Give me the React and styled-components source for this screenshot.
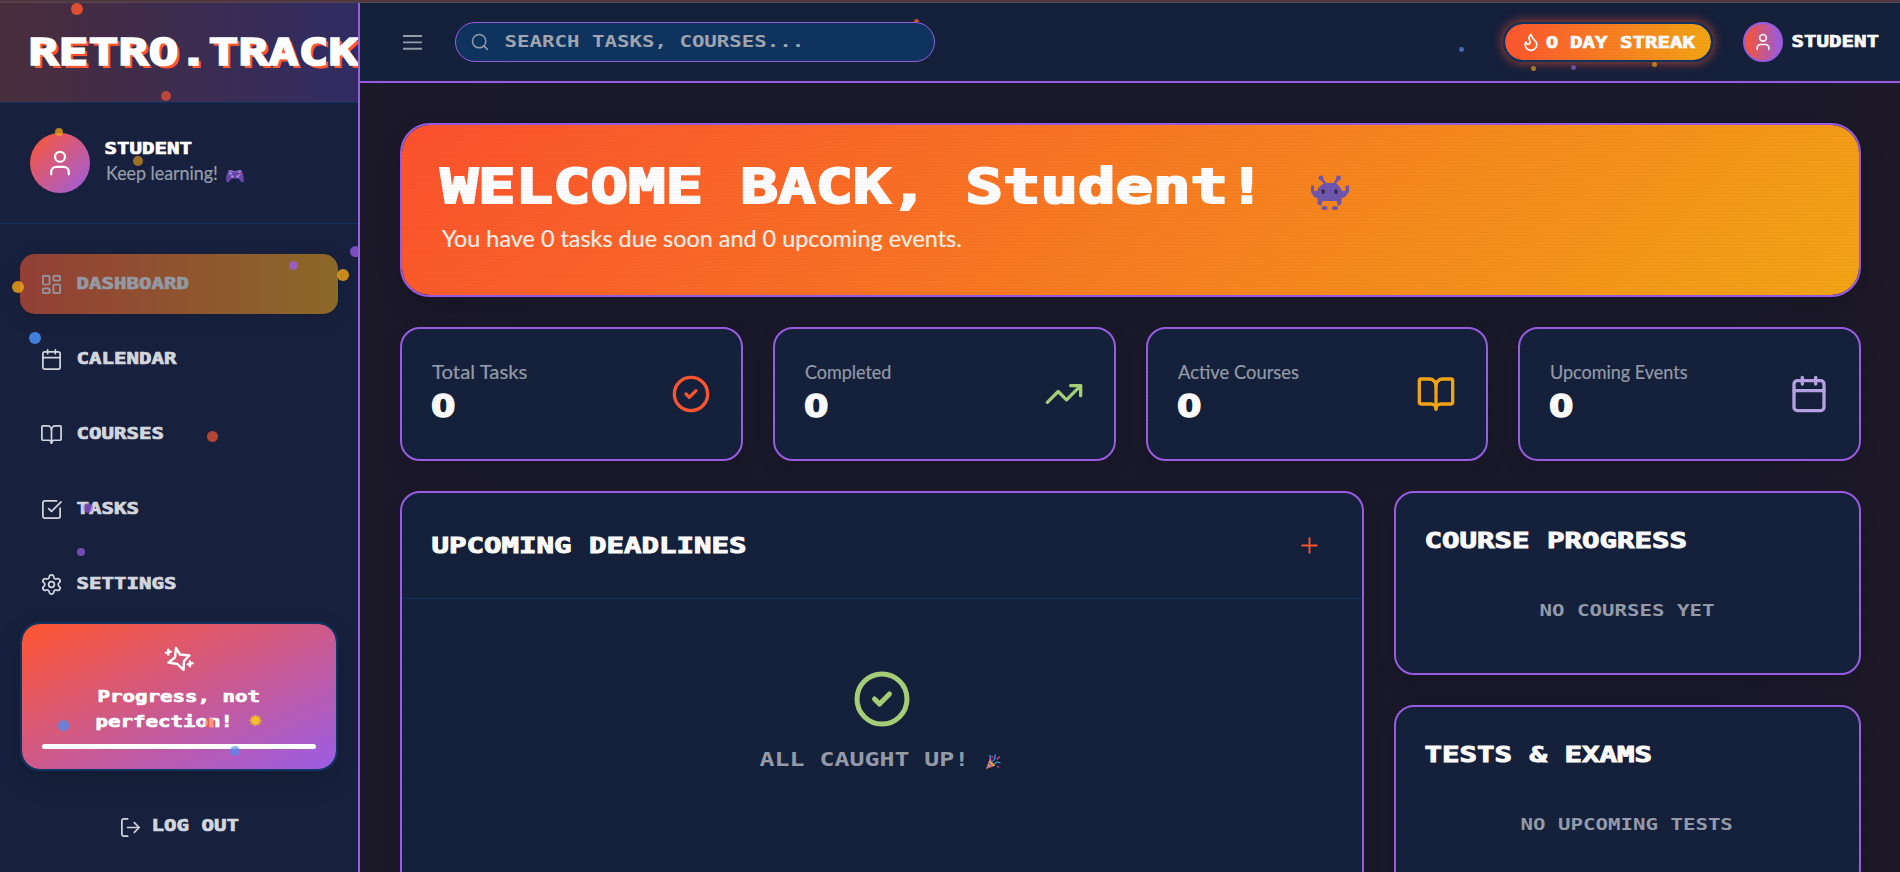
import React from 'react';
import styled, { createGlobalStyle } from 'styled-components';
import {
  Calendar, BookOpen, SquareCheckBig, Settings, LogOut, User, Search, Flame,
  CircleCheck, TrendingUp, Plus, LayoutDashboard,
} from 'lucide-react';

const c = {
  purple: '#9b5de5', orange: '#ff5630', amber: '#f5a614', navy: '#17213d',
  deep: '#0f3460', green: '#a8d078', lilac: '#b8a4e6', muted: '#969dab', blue: '#4a8df0',
  panel: '#15203c', base: '#1a192a',
};

const Global = createGlobalStyle`
  * { box-sizing: border-box; }
  body { margin: 0; background: ${c.base}; overflow: hidden; }
`;

const STRETCH = 1.32;

const PixelSpan = styled.span`
  display: block;
  flex: none;
  font-family: "DejaVu Sans Mono", monospace;
  font-weight: 700;
  font-size: ${(p) => p.$adv / (0.602 * STRETCH)}px;
  line-height: 1;
  white-space: pre;
  color: ${(p) => p.$color || '#fff'};
  -webkit-text-stroke: ${(p) => (p.$thin ? 0 : 0.045)}em ${(p) => p.$color || '#fff'};
  text-shadow: ${(p) => p.$shadow || 'none'};
  transform: translate(-0.5px, 0.5px) scaleX(${STRETCH});
  transform-origin: 0 50%;
  margin-right: ${(p) => p.$len * 0.602 * (STRETCH - 1)}em;
`;

const Pixel = ({ children, adv = 12.5, color, thin, shadow }) => (
  <PixelSpan $adv={adv} $color={color} $thin={thin} $shadow={shadow} $len={children.length}>
    {children}
  </PixelSpan>
);

const Digit = styled.span`
  display: block;
  flex: none;
  width: ${(p) => p.$adv}px;
  font-family: "DejaVu Sans", sans-serif;
  font-weight: 700;
  font-size: ${(p) => p.$adv * 1.3}px;
  line-height: ${(p) => p.$adv * 1.26}px;
  letter-spacing: 0;
  color: #fff;
  -webkit-text-stroke: 0.045em #fff;
  transform: translateY(0.5px) scaleX(1.08);
  transform-origin: 0 50%;
`;

const StreakText = styled.div`
  display: flex;
  align-items: center;
  padding-bottom: 1px;
`;

const Hand = styled.span`
  display: block;
  font-family: Lato, sans-serif;
  font-size: ${(p) => p.$size || 19}px;
  line-height: 1;
  color: ${(p) => p.$color || c.muted};
  white-space: nowrap;
  -webkit-text-stroke: 0.2px ${(p) => p.$color || c.muted};
  transform: scaleX(${(p) => p.$fit});
  transform-origin: 0 50%;
`;

const Page = styled.div`
  position: relative;
  width: 1900px;
  height: 872px;
  overflow: hidden;
  display: flex;
  flex-direction: column;
`;

const TopStrip = styled.div`
  flex: none;
  height: 3px;
  background: #50373f;
  border-bottom: 1px solid #55494d;
`;

const Shell = styled.div`
  flex: 1;
  min-height: 0;
  display: flex;
`;

const Sidebar = styled.aside`
  width: 360px;
  flex: none;
  background: ${c.navy};
  border-right: 2px solid ${c.purple};
  display: flex;
  flex-direction: column;
  overflow: hidden;
`;

const Brand = styled.div`
  height: 100px;
  flex: none;
  padding: 0 0 2px 29px;
  display: flex;
  align-items: center;
  overflow: hidden;
  background: linear-gradient(90deg, #4a2d3b, #302c63);
  border-bottom: 1px solid ${c.deep};
`;

const Profile = styled.div`
  height: 121px;
  flex: none;
  padding: 30px;
  display: flex;
  gap: 15px;
  border-bottom: 1px solid ${c.deep};
`;

const Avatar = styled.div`
  width: ${(p) => p.$size}px;
  height: ${(p) => p.$size}px;
  flex: none;
  border-radius: 50%;
  display: flex;
  align-items: center;
  justify-content: center;
  color: #fff;
  background: linear-gradient(${(p) => (p.$ring ? '90deg' : '135deg')}, ${c.orange}, ${c.purple});
  border: ${(p) => (p.$ring ? `2px solid ${c.purple}` : 'none')};
`;

const ProfileText = styled.div`
  padding-top: 7px;
  display: flex;
  flex-direction: column;
  gap: 7px;
`;

const HandRow = styled.div`
  display: flex;
  align-items: center;
  padding-left: 1px;
`;

const PadSlot = styled.span`
  display: flex;
  width: 18px;
  padding-top: 6px;
`;

const HandSlot = styled.span`
  width: 120px;
`;

const Nav = styled.nav`
  flex: none;
  padding: 30px 20px 0;
  display: flex;
  flex-direction: column;
  gap: 15px;
`;

const NavItem = styled.div`
  height: 60px;
  padding: 0 20px;
  display: flex;
  align-items: center;
  gap: 14px;
  border-radius: 15px;
  background: ${(p) => (p.$active ? 'linear-gradient(90deg, #933f36, #8b6928)' : 'none')};
  box-shadow: ${(p) => (p.$active ? '0 5px 19px rgba(0,0,0,.1)' : 'none')};
`;

const Lift = styled.div`
  padding-bottom: ${(p) => p.$by || 3}px;
  display: flex;
`;

const Quote = styled.div`
  margin: 8px 20px 0;
  height: 149px;
  flex: none;
  display: flex;
  flex-direction: column;
  align-items: center;
  padding-top: 20px;
  border-radius: 20px;
  border: 2px solid ${c.deep};
  background: linear-gradient(to bottom right, ${c.orange}, ${c.purple}) padding-box;
  box-shadow: 0 10px 24px rgba(0,0,0,.16);
`;

const QuoteLine = styled.div`
  height: 25px;
  display: flex;
  align-items: center;
  gap: 15px;
`;

const QuoteLines = styled.div`
  margin-top: 9px;
  display: flex;
  flex-direction: column;
  align-items: center;
`;

const QuoteBar = styled.div`
  width: 274px;
  height: 5px;
  margin-top: 11px;
  border-radius: 3px;
  background: #fff;
`;

const Logout = styled.div`
  flex: none;
  margin-top: 44px;
  height: 24px;
  display: flex;
  align-items: center;
  justify-content: center;
  gap: 10px;
  color: #d3d6dd;
`;

const Main = styled.main`
  flex: 1;
  min-width: 0;
  display: flex;
  flex-direction: column;
`;

const Header = styled.header`
  height: 80px;
  flex: none;
  display: flex;
  align-items: center;
  padding: 0 21px 0 40px;
  background: ${c.panel};
  border-bottom: 2px solid ${c.purple};
`;

const SearchBox = styled.div`
  width: 480px;
  height: 40px;
  margin-left: 30px;
  padding-left: 14px;
  display: flex;
  align-items: center;
  gap: 15px;
  border: 1px solid ${c.purple};
  border-radius: 20px;
  background: ${c.deep};
  color: ${c.muted};
`;

const Account = styled.div`
  margin-left: auto;
  display: flex;
  align-items: center;
`;

const Streak = styled.div`
  width: 210px;
  height: 40px;
  margin-right: 30px;
  padding-left: 16px;
  display: flex;
  align-items: center;
  gap: 5px;
  color: #fff;
  border: 2px solid ${c.deep};
  border-radius: 20px;
  background: linear-gradient(90deg, ${c.orange}, ${c.amber}) padding-box;
  box-shadow: 0 0 11px rgba(255,86,48,.75);
`;

const NameSlot = styled.div`
  margin-left: 9px;
  padding-bottom: 2px;
`;

const Content = styled.div`
  flex: 1;
  min-height: 0;
  padding: 40px 39px 0 40px;
  display: flex;
  flex-direction: column;
  gap: 30px;
  background: linear-gradient(90deg, rgba(30,24,38,.4), rgba(27,26,45,0) 12%, rgba(27,26,45,0) 88%, rgba(34,25,38,.4)), ${c.base};
`;

const Banner = styled.section`
  height: 174px;
  flex: none;
  padding: 36px 38px 0;
  border: 2px solid ${c.purple};
  border-radius: 30px;
  background: linear-gradient(135deg, #ff522e, ${c.amber}) padding-box;
  box-shadow: 0 10px 25px rgba(0,0,0,.15);
`;

const BannerTitle = styled.div`
  display: flex;
  align-items: center;
  height: 50px;
  padding-left: 1px;
`;

const InvaderSlot = styled.div`
  margin-left: 45px;
  padding-top: 13px;
  display: flex;
`;

const BannerText = styled.div`
  margin-top: 15px;
  padding-left: 2px;
`;

const Stats = styled.section`
  flex: none;
  display: grid;
  grid-template-columns: repeat(4, 1fr);
  gap: 30px;
`;

const Panel = styled.section`
  background: ${c.panel};
  border: 2px solid ${c.purple};
  border-radius: 20px;
  box-shadow: 0 8px 20px rgba(0,0,0,.12);
`;

const Stat = styled(Panel)`
  height: 134px;
  padding: 0 30px 0 29px;
  display: flex;
  align-items: center;
  justify-content: space-between;
`;

const StatText = styled.div`
  display: flex;
  flex-direction: column;
  gap: 9px;
  padding-bottom: 5px;
`;

const Indent = styled.div`
  padding-left: 1px;
  width: 150px;
`;

const Boards = styled.section`
  flex: 1;
  min-height: 0;
  display: grid;
  grid-template-columns: 1fr 467px;
  gap: 30px;
`;

const Deadlines = styled(Panel)`
  height: 520px;
`;

const DeadlinesHead = styled.div`
  height: 106px;
  padding: 0 40px 0 30px;
  display: flex;
  align-items: center;
  justify-content: space-between;
  color: ${c.orange};
  border-bottom: 1px solid ${c.deep};
`;

const Empty = styled.div`
  padding-top: 70px;
  display: flex;
  flex-direction: column;
  align-items: center;
  gap: 19px;
  color: ${c.green};
`;

const EmptyText = styled.div`
  display: flex;
  align-items: center;
  gap: 17px;
`;

const PopperSlot = styled.span`
  display: flex;
  padding: 6px 3px 0 0;
`;

const Column = styled.div`
  display: flex;
  flex-direction: column;
  gap: 30px;
`;

const SideCard = styled(Panel)`
  height: 184px;
  flex: none;
  padding: 36px 29px 0;
`;

const SideNote = styled.div`
  margin-top: 51px;
  display: flex;
  justify-content: center;
`;

const Scanlines = styled.div`
  position: absolute;
  inset: 3px 0 0 360px;
  pointer-events: none;
  background: repeating-linear-gradient(0deg, rgba(0,0,0,.035) 0 1px, rgba(0,0,0,.01) 1px 3px);
`;

const Dot = styled.i`
  position: absolute;
  left: ${(p) => p.$x - p.$r}px;
  top: ${(p) => p.$y - p.$r}px;
  width: ${(p) => p.$r * 2}px;
  height: ${(p) => p.$r * 2}px;
  border-radius: 50%;
  background: ${(p) => p.$color};
  opacity: ${(p) => p.$alpha};
`;

const DotLayer = styled.div`
  position: absolute;
  top: 0;
  left: 0;
  width: ${(p) => p.$width}px;
  height: 872px;
  overflow: hidden;
  pointer-events: none;
`;

const sideDots = [
  [77, 9, 6, c.orange, 0.82], [166, 96, 5, c.orange, 0.65], [59, 131.5, 4, c.amber, 0.72],
  [138, 161, 5, c.amber, 0.6], [293, 265.5, 4.5, c.purple, 0.8], [355.5, 251.5, 5.5, c.purple, 0.75],
  [343, 274.5, 6, c.amber, 0.8], [18, 287, 6, c.amber, 0.8], [35, 337.5, 6, c.blue, 0.88],
  [212, 436, 5.5, c.orange, 0.67], [88, 508, 5, c.purple, 0.65], [81, 552, 4, c.purple, 0.7],
  [63, 725.5, 5.5, c.blue, 0.75], [210, 722.5, 5, c.orange, 0.6], [235, 751, 5, c.blue, 0.65],
];

const headDots = [
  [1461.5, 49.5, 2.4, c.blue, 0.7], [1533.5, 68, 2.5, c.amber, 0.65],
  [1573.5, 67, 2.5, c.purple, 0.65], [1654.5, 64.5, 2.5, c.amber, 0.65],
];

const PeekDot = styled.i`
  position: absolute;
  left: 914px;
  top: 19px;
  width: 5px;
  height: 3px;
  border-radius: 3px 3px 0 0;
  background: #c94a35;
`;

const MenuIcon = () => (
  <svg width="25" height="25" viewBox="0 0 25 25" fill="none" stroke={c.muted} strokeWidth="1.9">
    <path d="M3 6h19M3 12.4h19M3 18.8h19" />
  </svg>
);

const SparkIcon = () => (
  <svg width="30" height="30" viewBox="0 0 30 30" fill="none" stroke="#fff" strokeWidth="2.4" strokeLinejoin="round" strokeLinecap="round">
    <path d="M12 4 L16 10.5 L25.500 11.500 L20 17 L19.500 26 L13.500 20 L4.500 18.500 L11 13.500Z" />
    <path d="M4.300 5.800v4.800M2 8.800l4.800-1.200M26 17.400v4.800M23.800 20.400l4.800-1.200" />
  </svg>
);

const Gamepad = () => (
  <svg width="18" height="14" viewBox="0 0 18 14">
    <path d="M3 1h3l1 1h4l1-1h3c2 2 3 7 2.8 11-.4 1.6-2 1.6-3 .4L12.400 9.500h-6.800L3.200 12.400c-1 1.200-2.600 1.200-3-.4C0 8 1 3 3 1z" fill="#6b45a8" />
    <path d="M3 1h3l1 1h4l1-1h3l1 2H2z" fill="#8a62c8" />
    <circle cx="6.300" cy="7.500" r="1.300" fill="#a894e0" /><circle cx="11.700" cy="7.500" r="1.300" fill="#a894e0" />
    <path d="M3 4.500h3M4.500 3v3" stroke="#7fa4f0" />
    <circle cx="13.500" cy="3.200" r=".8" fill="#48c8e8" /><circle cx="15" cy="4.600" r=".8" fill="#f04868" /><circle cx="13.500" cy="6" r=".8" fill="#48d8a0" />
  </svg>
);

const Invader = () => (
  <svg width="38" height="36" viewBox="0 0 38 36">
    <g fill="#6f56b0">
      <circle cx="10" cy="3" r="2.400" /><circle cx="27.500" cy="3" r="2.400" />
      <path d="M10 3l4 5.500M27.500 3l-4 5.500" stroke="#6f56b0" strokeWidth="2.500" />
      <path d="M13 8h12l4 4 2 4h3.500v-5.500H38V17l-4 5-3.500 1v6L27 31l-1.500-5h-14L10 31l-3.500-2v-6L3 22l-3-5v-6.500h3V16h3l2-4z" />
      <ellipse cx="13.500" cy="33" rx="3" ry="2" /><ellipse cx="24" cy="33" rx="3" ry="2" />
    </g>
    <ellipse cx="12.200" cy="16.500" rx="1.700" ry="2.600" fill="#3c2750" /><ellipse cx="25" cy="16.500" rx="1.700" ry="2.600" fill="#3c2750" />
  </svg>
);

const Sun = () => (
  <svg width="13" height="13" viewBox="0 0 13 13">
    <path d="M6.500 0l1 2.300L9.600 1v2.300l2.300-.6-1 2.200 2.100 1.600-2.100 1.400 1 2.200-2.300-.3V12l-2.100-1.500-1 2.500-1-2.500L3.400 12V9.800l-2.300.3 1-2.200L0 6.500l2.100-1.600-1-2.200 2.300.6V1l2.100 1.300z" fill="#eda92c" />
    <circle cx="6.500" cy="6.500" r="3.400" fill="#f0c52c" />
  </svg>
);

const Popper = () => (
  <svg width="15" height="15" viewBox="0 0 15 15">
    <path d="M3.500 5.500L9.500 11.500 0 15z" fill="#f2a13c" />
    <path d="M2.300 8.500l4 4M1.200 11.500l2.300 2.300" stroke="#8a5bd0" strokeWidth="1.400" />
    <path d="M4 5.500c.5-2 1-3-.5-4.500M6.500 7.500C9 5.500 9.500 3 9 .5M8.500 10c1.500-2.500 4-2 6-1" stroke="#38a0ea" strokeWidth="1.300" fill="none" />
    <path d="M5.500 2.500l1.500 1M10.500 5.500l3.500-3M11 12.500l2 .5M3.500 4l2 3" stroke="#e8388f" strokeWidth="1.500" />
  </svg>
);

const navItems = [
  ['DASHBOARD', LayoutDashboard], ['CALENDAR', Calendar], ['COURSES', BookOpen],
  ['TASKS', SquareCheckBig], ['SETTINGS', Settings],
];

const stats = [
  ['Total Tasks', CircleCheck, c.orange, 1.07], ['Completed', TrendingUp, c.green, 0.945],
  ['Active Courses', BookOpen, c.amber, 0.967], ['Upcoming Events', Calendar, c.lilac, 0.947],
];

export default function App() {
  return (
    <Page>
      <Global />
      <TopStrip />
      <Shell>
        <Sidebar>
          <Brand>
            <Pixel adv={30} shadow={`2.3px 3px 0 ${c.orange}`}>RETRO.TRACK</Pixel>
          </Brand>
          <Profile>
            <Avatar $size={60}><User size={30} strokeWidth={1.8} /></Avatar>
            <ProfileText>
              <Pixel>STUDENT</Pixel>
              <HandRow>
                <HandSlot><Hand $fit={0.94}>Keep learning!</Hand></HandSlot>
                <PadSlot><Gamepad /></PadSlot>
              </HandRow>
            </ProfileText>
          </Profile>
          <Nav>
            {navItems.map(([label, Icon], i) => (
              <NavItem key={label} $active={i === 0}>
                <Icon size={23} strokeWidth={1.8} color={i === 0 ? '#9499a3' : '#d3d6dd'} />
                <Lift><Pixel color={i === 0 ? '#9499a3' : '#d3d6dd'}>{label}</Pixel></Lift>
              </NavItem>
            ))}
          </Nav>
          <Quote>
            <SparkIcon />
            <QuoteLines>
              <QuoteLine><Pixel>Progress, not</Pixel></QuoteLine>
              <QuoteLine><Pixel>perfection!</Pixel><Sun /></QuoteLine>
            </QuoteLines>
            <QuoteBar />
          </Quote>
          <Logout>
            <LogOut size={23} strokeWidth={1.8} />
            <Lift $by={5}><Pixel color="#d3d6dd">LOG OUT</Pixel></Lift>
          </Logout>
        </Sidebar>
        <Main>
          <Header>
            <MenuIcon />
            <SearchBox>
              <Search size={20} strokeWidth={1.8} />
              <Lift><Pixel thin color="#a3a7b0">SEARCH TASKS, COURSES...</Pixel></Lift>
            </SearchBox>
            <Account>
              <Streak>
                <Flame size={20} strokeWidth={2} />
                <StreakText>
                  <Digit $adv={12.5}>0</Digit>
                  <Pixel> DAY STREAK</Pixel>
                </StreakText>
              </Streak>
              <Avatar $size={40} $ring><User size={20} strokeWidth={2} /></Avatar>
              <NameSlot><Pixel>STUDENT</Pixel></NameSlot>
            </Account>
          </Header>
          <Content>
            <Banner>
              <BannerTitle>
                <Pixel adv={37.5}>WELCOME BACK, Student!</Pixel>
                <InvaderSlot><Invader /></InvaderSlot>
              </BannerTitle>
              <BannerText>
                <Hand $size={24} $fit={0.975} $color="#fff0ea">You have 0 tasks due soon and 0 upcoming events.</Hand>
              </BannerText>
            </Banner>
            <Stats>
              {stats.map(([label, Icon, color, fit]) => (
                <Stat key={label}>
                  <StatText>
                    <Indent><Hand $fit={fit}>{label}</Hand></Indent>
                    <Digit $adv={25}>0</Digit>
                  </StatText>
                  <Icon size={40} color={color} />
                </Stat>
              ))}
            </Stats>
            <Boards>
              <Deadlines>
                <DeadlinesHead>
                  <Pixel adv={17.5}>UPCOMING DEADLINES</Pixel>
                  <Plus size={25} strokeWidth={1.8} />
                </DeadlinesHead>
                <Empty>
                  <CircleCheck size={60} />
                  <EmptyText>
                    <Pixel thin adv={15} color={c.muted}>ALL CAUGHT UP!</Pixel>
                    <PopperSlot><Popper /></PopperSlot>
                  </EmptyText>
                </Empty>
              </Deadlines>
              <Column>
                <SideCard>
                  <Pixel adv={17.5}>COURSE PROGRESS</Pixel>
                  <SideNote><Pixel thin color={c.muted}>NO COURSES YET</Pixel></SideNote>
                </SideCard>
                <SideCard>
                  <Pixel adv={17.5}>TESTS &amp; EXAMS</Pixel>
                  <SideNote><Pixel thin color={c.muted}>NO UPCOMING TESTS</Pixel></SideNote>
                </SideCard>
              </Column>
            </Boards>
          </Content>
        </Main>
      </Shell>
      <Scanlines />
      <DotLayer $width={358}>
        {sideDots.map(([x, y, r, color, a]) => <Dot key={`${x}-${y}`} $x={x} $y={y} $r={r} $color={color} $alpha={a} />)}
      </DotLayer>
      <DotLayer $width={1900}>
        {headDots.map(([x, y, r, color, a]) => <Dot key={`${x}-${y}`} $x={x} $y={y} $r={r} $color={color} $alpha={a} />)}
        <PeekDot />
      </DotLayer>
    </Page>
  );
}
